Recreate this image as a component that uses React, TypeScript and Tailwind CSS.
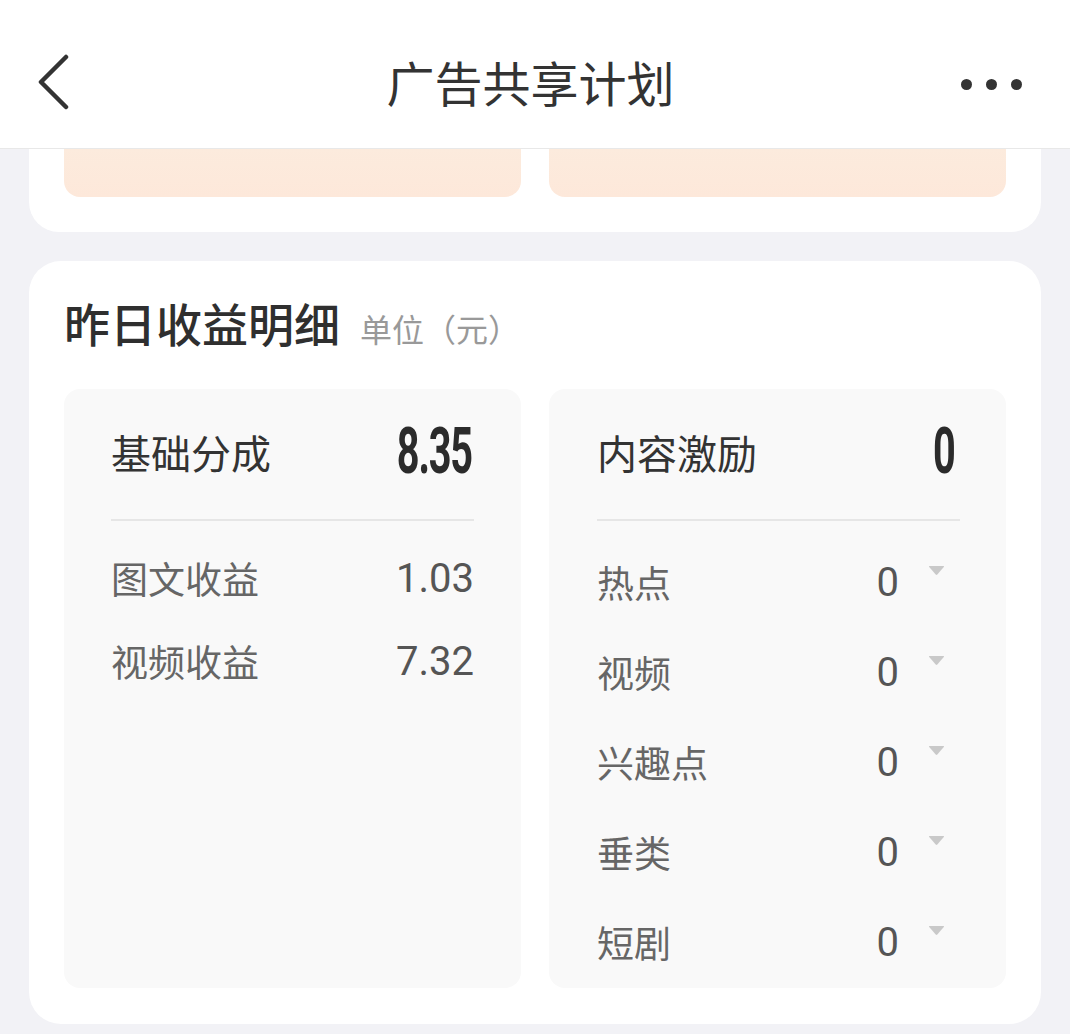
const cjk = { fontFamily: '"Noto Sans CJK SC", "Noto Sans", sans-serif' };
const num = { fontFamily: 'Roboto, "Noto Sans", sans-serif' };

function Caret() {
  return (
    <svg width="17" height="11" viewBox="0 0 17 11" className="mt-[6px] shrink-0">
      <path d="M1.5 1 H15.5 Q16.5 1 15.8 2 L9.3 9.6 Q8.5 10.4 7.7 9.6 L1.2 2 Q0.5 1 1.5 1 Z" fill="#c9c9c9" />
    </svg>
  );
}

const leftRows = [
  { label: "图文收益", value: "1.03" },
  { label: "视频收益", value: "7.32" },
];

const rightRows = ["热点", "视频", "兴趣点", "垂类", "短剧"];

export default function App() {
  return (
    <div className="min-h-screen bg-[#f2f2f6]" style={cjk}>
      {/* top bar */}
      <div className="h-[149px] bg-white border-b border-[#e8e8e8] flex items-center justify-between px-[36px] pt-[14px]">
        <svg width="34" height="56" viewBox="0 0 34 56" className="mt-[2px]">
          <path d="M30 3 L5 28 L30 53" fill="none" stroke="#333" strokeWidth="4.5" strokeLinecap="round" strokeLinejoin="round" />
        </svg>
        <div className="text-[48px] text-[#333] ml-[30px]">广告共享计划</div>
        <div className="flex items-center gap-[14px] mr-[12px] mt-[6px]">
          <span className="w-[11px] h-[11px] rounded-full bg-[#333]" />
          <span className="w-[11px] h-[11px] rounded-full bg-[#333]" />
          <span className="w-[11px] h-[11px] rounded-full bg-[#333]" />
        </div>
      </div>

      {/* previous card, scrolled under the bar */}
      <div className="mx-[29px] bg-white rounded-b-[30px] px-[35px] pb-[35px] grid grid-cols-2 gap-[28px]">
        <div className="h-[48px] rounded-b-[16px] bg-gradient-to-b from-[#fcebdd] to-[#fde8da]" />
        <div className="h-[48px] rounded-b-[16px] bg-gradient-to-b from-[#fcebdd] to-[#fde8da]" />
      </div>

      {/* yesterday detail */}
      <div className="mx-[29px] mt-[29px] bg-white rounded-[32px] px-[35px] pt-[33px] pb-[36px]">
        <div className="flex items-baseline h-[56px]">
          <span className="text-[46px] font-medium text-[#2f2f2f] leading-[56px]">昨日收益明细</span>
          <span className="text-[32px] text-[#999] ml-[20px] leading-[56px]">单位（元）</span>
        </div>

        <div className="grid grid-cols-2 gap-[28px] mt-[39px]">
          <div className="h-[599px] rounded-[16px] bg-[#f9f9f9] px-[47px] pt-[23px]">
            <div className="h-[80px] flex items-center justify-between">
              <span className="text-[40px] text-[#333]">基础分成</span>
              <span
                className="inline-block text-[64px] font-bold text-[#2b2b2b] scale-x-[0.62] origin-right tracking-[-2px] mr-[2px]"
                style={num}
              >
                8.35
              </span>
            </div>
            <div className="h-[2px] bg-[#e6e6e6] mt-[27px]" />
            <div className="mt-[16px]">
              {leftRows.map((r) => (
                <div key={r.label} className="h-[83px] flex items-center justify-between">
                  <span className="text-[37px] text-[#666]">{r.label}</span>
                  <span className="text-[40px] text-[#555]" style={num}>
                    {r.value}
                  </span>
                </div>
              ))}
            </div>
          </div>

          <div className="h-[599px] rounded-[16px] bg-[#f9f9f9] pl-[48px] pr-[46px] pt-[23px]">
            <div className="h-[80px] flex items-center justify-between">
              <span className="text-[40px] text-[#333]">内容激励</span>
              <span
                className="inline-block text-[64px] font-bold text-[#2b2b2b] scale-x-[0.62] origin-right mr-[4px]"
                style={num}
              >
                0
              </span>
            </div>
            <div className="h-[2px] bg-[#e6e6e6] mt-[27px]" />
            <div className="mt-[17px]">
              {rightRows.map((label) => (
                <div key={label} className="h-[90px] flex items-center justify-between">
                  <span className="text-[37px] text-[#666]">{label}</span>
                  <div className="flex items-start gap-[29px] mr-[15px]">
                    <span className="text-[40px] text-[#555] leading-[48px]" style={num}>
                      0
                    </span>
                    <Caret />
                  </div>
                </div>
              ))}
            </div>
          </div>
        </div>
      </div>
    </div>
  );
}
